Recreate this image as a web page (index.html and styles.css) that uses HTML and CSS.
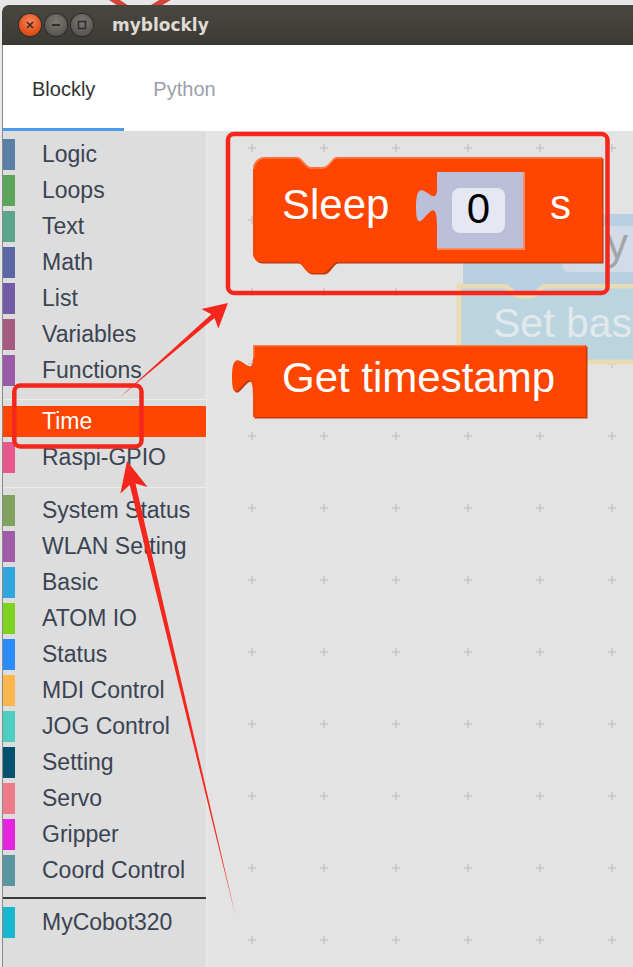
FILE: index.html
```html
<!DOCTYPE html>
<html>
<head>
<meta charset="utf-8">
<title>myblockly</title>
<link rel="stylesheet" href="styles.css">
</head>
<body>
<svg class="behind-icon" width="120" height="8" viewBox="100 0 120 8">
  <path d="M110 -3 L128 9 M170 -3 L150 9" stroke="#d2443a" stroke-width="6" fill="none"/>
</svg>
<div class="window">
  <header class="titlebar">
    <div class="controls">
      <span class="wbtn close"><svg width="8" height="8" viewBox="0 0 8 8"><path d="M1 1L7 7M7 1L1 7" stroke="#3b2a22" stroke-width="1.6"/></svg></span>
      <span class="wbtn min"><svg width="10" height="10" viewBox="0 0 10 10"><path d="M1 5H9" stroke="#2f2e2b" stroke-width="2"/></svg></span>
      <span class="wbtn max"><svg width="10" height="10" viewBox="0 0 10 10"><rect x="1.5" y="1.5" width="7" height="7" fill="none" stroke="#2f2e2b" stroke-width="1.6"/></svg></span>
    </div>
    <span class="title">myblockly</span>
  </header>
  <div class="content">
    <nav class="tabs">
      <div class="tab active">Blockly</div>
      <div class="tab">Python</div>
    </nav>
    <div class="main">
      <aside class="toolbox">
        <div class="cat c-logic">Logic</div>
        <div class="cat c-loops">Loops</div>
        <div class="cat c-text">Text</div>
        <div class="cat c-math">Math</div>
        <div class="cat c-list">List</div>
        <div class="cat c-vars">Variables</div>
        <div class="cat c-funcs">Functions</div>
        <div class="sep"></div>
        <div class="cat c-time active">Time</div>
        <div class="cat c-gpio">Raspi-GPIO</div>
        <div class="sep second"></div>
        <div class="cat c-sys">System Status</div>
        <div class="cat c-wlan">WLAN Setting</div>
        <div class="cat c-basic">Basic</div>
        <div class="cat c-atom">ATOM IO</div>
        <div class="cat c-status">Status</div>
        <div class="cat c-mdi">MDI Control</div>
        <div class="cat c-jog">JOG Control</div>
        <div class="cat c-setting">Setting</div>
        <div class="cat c-servo">Servo</div>
        <div class="cat c-grip">Gripper</div>
        <div class="cat c-coord">Coord Control</div>
        <div class="sep dark"></div>
        <div class="cat c-cobot">MyCobot320</div>
      </aside>
      <div class="workspace">
        <svg class="ws-svg" width="426" height="836" viewBox="207 131 426 836">
          <defs>
            <pattern id="grid" patternUnits="userSpaceOnUse" x="216" y="112" width="72" height="72">
              <path d="M32 36H40M36 32V40" stroke="#cbcbcb" stroke-width="1.8"/>
            </pattern>
          </defs>
          <rect x="207" y="131" width="426" height="836" fill="url(#grid)"/>

          <!-- faded blocks behind -->
          <path d="M459 286 H505 c5 0 8 10 14 10 h12 c6 0 9 -10 14 -10 H650 V362 H459 Z" fill="#bad5df" stroke="#e7dcb4" stroke-width="5"/>
          <text class="ghost-text" x="493" y="337">Set bas</text>
          <path d="M463 214 H650 V284 H545 c-5 0 -8 8 -14 8 h-12 c-6 0 -9 -8 -14 -8 H463 Z" fill="#b9d0e3"/>
          <rect x="562" y="226" width="90" height="46" rx="7" fill="#d3dce6"/>
          <text class="ghost-y" x="606" y="259">y</text>

          <!-- Sleep block -->
          <g>
            <path transform="translate(1.5 1.5)" fill="#c03a0c" d="M253 169 a12 12 0 0 1 12 -12 H297 c5 0 8 10 14 10 h12 c6 0 9 -10 14 -10 H602 V262 H337 c-5 0 -8 11 -14 11 h-12 c-6 0 -9 -11 -14 -11 H261 a8 8 0 0 1 -8 -8 Z"/>
            <path fill="#ff4500" d="M253 169 a12 12 0 0 1 12 -12 H297 c5 0 8 10 14 10 h12 c6 0 9 -10 14 -10 H602 V262 H337 c-5 0 -8 11 -14 11 h-12 c-6 0 -9 -11 -14 -11 H261 a8 8 0 0 1 -8 -8 Z"/>
            <path fill="none" stroke="#ff7d4d" stroke-width="1.5" d="M253.8 169 a11 11 0 0 1 11 -11 H297 c5 0 8 10 14 10 h12 c6 0 9 -10 14 -10 H601"/>
            <path fill="none" stroke="#ff8a5c" stroke-width="2" d="M437 249 H524 V172"/>
            <path fill="#bbbfd9" d="M437 172 H523 V248 H437 V227 C437 181.5 416 248 416 207.5 C416 167 437 214 437 188 Z"/>
            <rect x="452" y="188" width="53" height="45" rx="8" fill="#e5e8f3"/>
            <text class="blk-text" x="282" y="219">Sleep</text>
            <text class="field-text" x="478.5" y="223">0</text>
            <text class="blk-text" x="550" y="219">s</text>
          </g>

          <!-- Get timestamp block -->
          <g>
            <path transform="translate(1.5 1.5)" fill="#c03a0c" d="M253 345 H586 V417 H253 V397 C253 351.5 232 418 232 377.5 C232 337 253 384 253 358 Z"/>
            <path fill="#ff4500" d="M253 345 H586 V417 H253 V397 C253 351.5 232 418 232 377.5 C232 337 253 384 253 358 Z"/>
            <path fill="none" stroke="#ff7d4d" stroke-width="1.5" d="M253.8 358 V345.8 H585"/>
            <text class="blk-text" x="282" y="392">Get timestamp</text>
          </g>
        </svg>
      </div>
    </div>
  </div>
</div>

<svg class="annotations" width="633" height="967" viewBox="0 0 633 967">
  <rect x="228" y="134" width="379.5" height="159" rx="6" fill="none" stroke="#f5271c" stroke-width="4.5"/>
  <rect x="14.3" y="385.5" width="127.2" height="61" rx="6" fill="none" stroke="#f5271c" stroke-width="4.5"/>
  <polygon fill="#f5271c" points="119,398 214.5,318 218.4,328.5 228,303 201.4,308.9 211.3,314.2"/>
  <polygon fill="#f5271c" points="236,918 135.5,483.6 147.6,487 127,461 120.4,493.5 129.7,485"/>
</svg>
</body>
</html>
```

FILE: styles.css
```css
* {
  box-sizing: border-box;
}

html,
body {
  margin: 0;
  padding: 0;
}

body {
  width: 633px;
  height: 967px;
  overflow: hidden;
  position: relative;
  background: #e7e7e7;
  font-family: "Liberation Sans", Arial, sans-serif;
}

.behind-icon {
  position: absolute;
  left: 100px;
  top: 0;
}

.window {
  position: relative;
  margin: 5px -30px 0 2px;
}

/* ---------- title bar ---------- */
.titlebar {
  height: 40px;
  background: linear-gradient(#48473f, #3b3a36);
  border-radius: 7px 7px 0 0;
  display: flex;
  align-items: center;
  padding-left: 17px;
}

.controls {
  display: flex;
  gap: 4px;
}

.wbtn {
  width: 22px;
  height: 22px;
  border-radius: 50%;
  display: flex;
  align-items: center;
  justify-content: center;
  box-shadow: 0 0 0 1px #2c2b28;
}

.wbtn.close {
  background: radial-gradient(circle at 50% 35%, #f6875a, #e2501a 65%, #c8430f);
}

.wbtn.min,
.wbtn.max {
  background: radial-gradient(circle at 50% 35%, #7a7974, #5c5b56 65%, #4e4d49);
}

.title {
  margin-left: 19px;
  color: #dfdbd2;
  font: bold 17px "DejaVu Sans", sans-serif;
}

/* ---------- content ---------- */
.content {
  background: #fff;
  border-left: 1px solid #8a8a8a;
}

.tabs {
  height: 86px;
  display: flex;
  background: #fff;
}

.tab {
  display: flex;
  align-items: center;
  padding: 5px 29px 0;
  font-size: 20px;
  color: #9aa0a8;
  border-bottom: 3px solid transparent;
}

.tab.active {
  color: #303133;
  border-bottom-color: #4a9be8;
}

.main {
  display: flex;
  height: 836px;
}

/* ---------- toolbox ---------- */
.toolbox {
  flex: none;
  width: 204px;
  background: #dddddd;
  border-right: 1px solid #ececec;
  padding-top: 6px;
  display: flex;
  flex-direction: column;
}

.cat {
  height: 31px;
  line-height: 31px;
  margin: 2px 0 3px;
  border-left: 12px solid #999;
  padding-left: 27px;
  font-size: 23px;
  color: #3a4452;
  white-space: nowrap;
}

.cat.active {
  background: #ff4500;
  color: #fff;
}

.sep {
  margin: 10px 0 4px;
  border-top: 1px solid #ececec;
}

.sep.second {
  margin: 11px 0 5px;
}

.sep.dark {
  margin: 8px 0 6px;
  border-top: 2px solid #3a3a3a;
}

.c-logic { border-left-color: #5b80a5; }
.c-loops { border-left-color: #5ba55b; }
.c-text { border-left-color: #5ba58c; }
.c-math { border-left-color: #5b67a5; }
.c-list { border-left-color: #745ba5; }
.c-vars { border-left-color: #a55b80; }
.c-funcs { border-left-color: #995ba5; }
.c-time { border-left-color: #ff4500; }
.c-gpio { border-left-color: #e8568e; }
.c-sys { border-left-color: #80a25e; }
.c-wlan { border-left-color: #a05ca6; }
.c-basic { border-left-color: #2fa6de; }
.c-atom { border-left-color: #7ed321; }
.c-status { border-left-color: #2a8cff; }
.c-mdi { border-left-color: #ffb74d; }
.c-jog { border-left-color: #4ecdc0; }
.c-setting { border-left-color: #00526f; }
.c-servo { border-left-color: #ee7b8a; }
.c-grip { border-left-color: #e524e0; }
.c-coord { border-left-color: #5a96a2; }
.c-cobot { border-left-color: #17b7d0; }

/* ---------- workspace ---------- */
.workspace {
  flex: 1;
  background: #e3e3e3;
  overflow: hidden;
}

.ws-svg {
  display: block;
}

.blk-text {
  font-family: "Liberation Sans", Arial, sans-serif;
  font-size: 42px;
  fill: #ffffff;
}

.field-text {
  font-family: "Liberation Sans", Arial, sans-serif;
  font-size: 42px;
  fill: #000;
  text-anchor: middle;
}

.ghost-text {
  font-family: "Liberation Sans", Arial, sans-serif;
  font-size: 41px;
  fill: #e2e9ec;
}

.ghost-y {
  font-family: "Liberation Sans", Arial, sans-serif;
  font-size: 44px;
  fill: #a2a6aa;
}

/* ---------- annotation overlay ---------- */
.annotations {
  position: absolute;
  left: 0;
  top: 0;
  pointer-events: none;
}
```
